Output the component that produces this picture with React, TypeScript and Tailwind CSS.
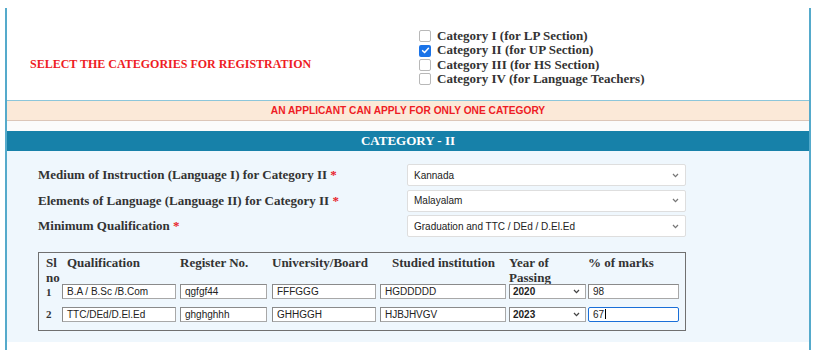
import React from "react";

const serif = "font-['Liberation_Serif',serif]";
const sans = "font-['Liberation_Sans',Arial,sans-serif]";

function Box({ checked }: { checked?: boolean }) {
  if (checked) {
    return (
      <span className="inline-flex w-[12px] h-[12px] rounded-[2px] bg-[#1a73e8] items-center justify-center shrink-0">
        <svg width="9" height="9" viewBox="0 0 10 10">
          <path d="M1.8 5.2 L4 7.3 L8.3 2.6" fill="none" stroke="white" strokeWidth="1.7" strokeLinecap="round" strokeLinejoin="round" />
        </svg>
      </span>
    );
  }
  return <span className="inline-block w-[12px] h-[12px] rounded-[2px] border border-[#b8b8b8] bg-white shrink-0" />;
}

function Chevron({ dark }: { dark?: boolean }) {
  return (
    <svg width="7" height="5" viewBox="0 0 7 5" className="shrink-0">
      <path d="M1 1 L3.5 3.6 L6 1" fill="none" stroke={dark ? "#444" : "#777"} strokeWidth="1.3" />
    </svg>
  );
}

function Select({ value }: { value: string }) {
  return (
    <div className={`w-[279px] h-[22px] bg-white border border-[#dedede] rounded-[2px] flex items-center justify-between pl-[6px] pr-[6px] ${sans} text-[10px] text-[#222]`}>
      <span>{value}</span>
      <Chevron />
    </div>
  );
}

function Input({ w, value, focus }: { w: string; value: string; focus?: boolean }) {
  return (
    <div
      className={`${w} h-[15px] bg-white flex items-center pl-[4px] ${sans} text-[10px] text-[#222] ${
        focus ? "border-[1.5px] border-[#1a6fd8] rounded-[2px]" : "border border-[#a8a8a8] border-t-[#8a8a8a] border-l-[#8a8a8a]"
      }`}
    >
      {value}
      {focus && <span className="inline-block w-[1px] h-[10px] bg-black ml-[1px]" />}
    </div>
  );
}

function YearSel({ value }: { value: string }) {
  return (
    <div className={`w-[77px] h-[15px] bg-white border border-[#a8a8a8] border-t-[#8a8a8a] border-l-[#8a8a8a] flex items-center justify-between pl-[3px] pr-[5px] ${sans} text-[10px] font-bold text-[#222]`}>
      <span>{value}</span>
      <Chevron dark />
    </div>
  );
}

const labelCls = `${serif} font-bold text-[13px] text-[#333]`;

export default function App() {
  return (
    <div className="w-[819px] h-[354px] bg-white pt-[8px] pl-[5px]">
      <div className="w-[806px] h-[342px] border-x-2 border-[#55aacb] flex flex-col">
        {/* top */}
        <div className="h-[93px] border-b border-[#8cc6da] flex">
          <div className={`w-[405px] pl-[23px] pt-[49px] ${serif} font-bold text-[12px] text-[#ee1c24] leading-[14px]`}>
            SELECT THE CATEGORIES FOR REGISTRATION
          </div>
          <div className={`pl-[7px] pt-[21px] flex flex-col ${labelCls} leading-[14.4px]`}>
            {[
              ["Category I (for LP Section)", false],
              ["Category II (for UP Section)", true],
              ["Category III (for HS Section)", false],
              ["Category IV (for Language Teachers)", false],
            ].map(([t, c]) => (
              <div key={t as string} className="flex items-center gap-[6px]">
                <Box checked={c as boolean} />
                <span>{t as string}</span>
              </div>
            ))}
          </div>
        </div>
        {/* warning */}
        <div className={`h-[20px] bg-[#fbe9d8] border-b border-[#dcc6b8] flex items-center justify-center ${sans} font-bold text-[10.2px] text-[#ee1c24]`}>
          AN APPLICANT CAN APPLY FOR ONLY ONE CATEGORY
        </div>
        <div className="h-[10px] bg-[#fbfbfb]" />
        {/* header */}
        <div className={`h-[20px] bg-[#1781a9] flex items-center justify-center ${serif} font-bold text-[13px] text-white`}>
          CATEGORY - II
        </div>
        {/* panel */}
        <div className="h-[191px] bg-[#eff7fd] pl-[31px] pt-[13px]">
          <div className="flex flex-col gap-[3.5px]">
            {[
              ["Medium of Instruction (Language I) for Category II", "Kannada"],
              ["Elements of Language (Language II) for Category II", "Malayalam"],
              ["Minimum Qualification", "Graduation and TTC / DEd / D.El.Ed"],
            ].map(([l, v]) => (
              <div key={l} className="flex items-center">
                <div className={`w-[369px] ${labelCls}`}>
                  {l} <span className="text-[#e8222a]">*</span>
                </div>
                <Select value={v} />
              </div>
            ))}
          </div>
          {/* table */}
          <div className="mt-[15px] w-[648px] h-[79px] border-[1.5px] border-[#707070] pl-[7px] pt-[3px]">
            <div className={`flex ${serif} font-bold text-[13px] text-[#333] leading-[14.5px] h-[27.5px]`}>
              <div className="w-[16px]">Sl<br />no</div>
              <div className="w-[118px] pl-[5px]">Qualification</div>
              <div className="w-[92px]">Register No.</div>
              <div className="w-[120px]">University/Board</div>
              <div className="w-[117px]">Studied institution</div>
              <div className="w-[79px]">Year of<br />Passing</div>
              <div>% of marks</div>
            </div>
            {[
              ["1", "B.A / B.Sc /B.Com", "qgfgf44", "FFFGGG", "HGDDDDD", "2020", "98", false],
              ["2", "TTC/DEd/D.El.Ed", "ghghghhh", "GHHGGH", "HJBJHVGV", "2023", "67", true],
            ].map((r, i) => (
              <div key={i} className={`flex items-center ${i === 1 ? "mt-[6px]" : "mt-[0px]"}`}>
                <div className={`w-[16px] ${serif} font-bold text-[11px] text-[#333]`}>{r[0] as string}</div>
                <Input w="w-[114px]" value={r[1] as string} />
                <div className="w-[4px]" />
                <Input w="w-[87px]" value={r[2] as string} />
                <div className="w-[5px]" />
                <Input w="w-[104px]" value={r[3] as string} />
                <div className="w-[4px]" />
                <Input w="w-[126px]" value={r[4] as string} />
                <div className="w-[3px]" />
                <YearSel value={r[5] as string} />
                <div className="w-[2px]" />
                <Input w="w-[91px]" value={r[6] as string} focus={r[7] as boolean} />
              </div>
            ))}
          </div>
        </div>
      </div>
    </div>
  );
}
